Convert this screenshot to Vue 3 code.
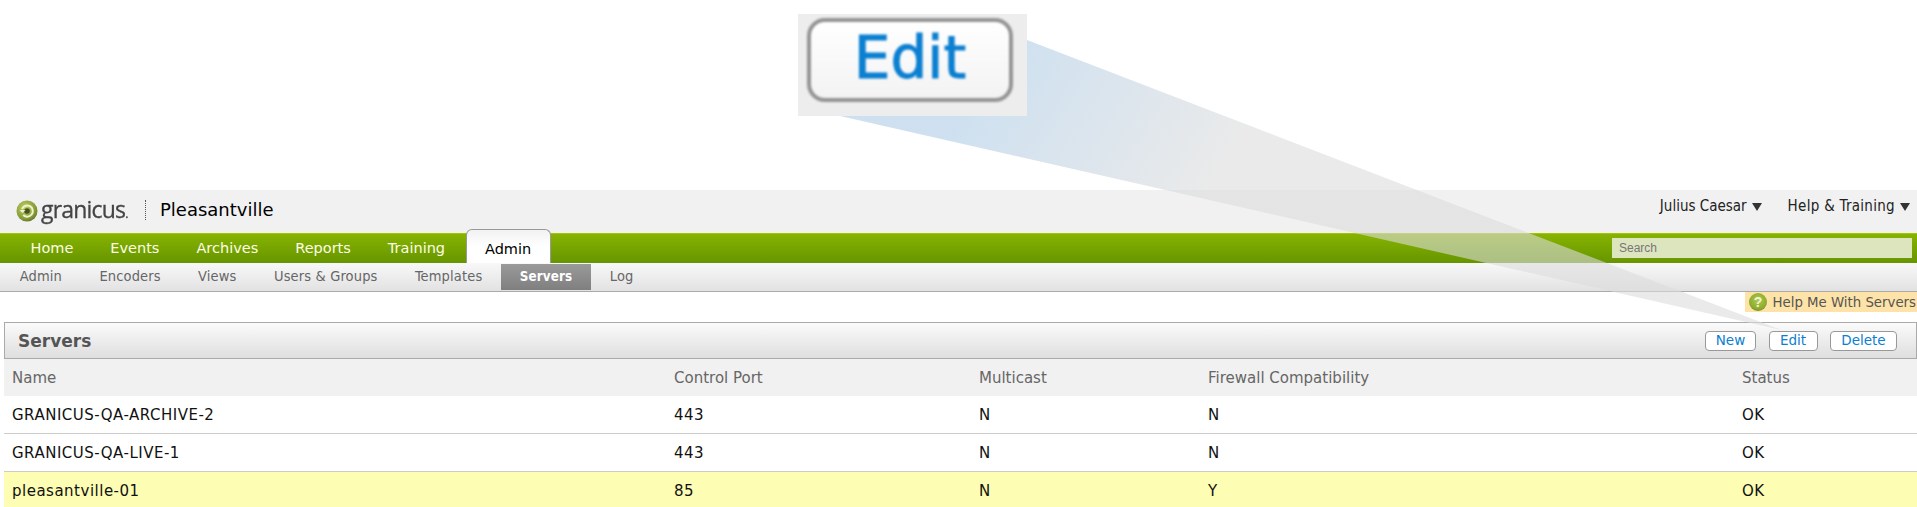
<script setup>
const mainTabs = ['Home', 'Events', 'Archives', 'Reports', 'Training']
const subTabs = ['Admin', 'Encoders', 'Views', 'Users & Groups', 'Templates', 'Servers', 'Log']
const servers = [
  { name: 'GRANICUS-QA-ARCHIVE-2', port: '443', multicast: 'N', firewall: 'N', status: 'OK' },
  { name: 'GRANICUS-QA-LIVE-1', port: '443', multicast: 'N', firewall: 'N', status: 'OK' },
  { name: 'pleasantville-01', port: '85', multicast: 'N', firewall: 'Y', status: 'OK', selected: true }
]
</script>

<template>
  <div class="page">
    <header class="top-bar">
      <div class="brand">
        <svg class="logo-mark" width="22" height="22" viewBox="0 0 22 22">
          <defs>
            <radialGradient id="logoBall" cx="0.4" cy="0.35" r="0.75">
              <stop offset="0" stop-color="#c2cf62" />
              <stop offset="0.7" stop-color="#849a35" />
              <stop offset="1" stop-color="#56632c" />
            </radialGradient>
          </defs>
          <circle cx="11" cy="11" r="10.5" fill="url(#logoBall)" />
          <path d="M6 9a5.6 5.6 0 1 1 1.2 6" fill="none" stroke="#eef2cf" stroke-width="2" />
          <circle cx="11" cy="11" r="2.8" fill="#46521f" />
          <path d="M3.5 10h6l-3 3z" fill="#eef2cf" />
        </svg>
        <span class="logo-text">granicus<i>.</i></span>
        <span class="site-name">Pleasantville</span>
      </div>
      <div class="user-links">
        <span>Julius Caesar<b class="caret"></b></span>
        <span class="help-menu">Help &amp; Training<b class="caret"></b></span>
      </div>
    </header>

    <nav class="main-nav">
      <a v-for="t in mainTabs" :key="t" class="main-tab">{{ t }}</a>
      <a class="main-tab active">Admin</a>
      <input class="search" placeholder="Search" />
    </nav>

    <nav class="sub-nav">
      <a v-for="t in subTabs" :key="t" class="sub-tab" :class="{ current: t === 'Servers' }">{{ t }}</a>
    </nav>

    <div class="help-row">
      <span class="help-link">
        <svg width="18" height="18" viewBox="0 0 18 18">
          <defs>
            <radialGradient id="helpBall" cx="0.5" cy="0.4" r="0.65">
              <stop offset="0" stop-color="#b4cb4f" />
              <stop offset="0.75" stop-color="#8cab2c" />
              <stop offset="1" stop-color="#66841f" />
            </radialGradient>
          </defs>
          <circle cx="9" cy="9" r="9" fill="url(#helpBall)" />
          <text x="9" y="14" text-anchor="middle" class="help-q">?</text>
        </svg>
        Help Me With Servers
      </span>
    </div>

    <section class="panel">
      <div class="panel-head">
        <h2>Servers</h2>
        <div class="actions">
          <button class="btn new">New</button>
          <button class="btn edit">Edit</button>
          <button class="btn delete">Delete</button>
        </div>
      </div>
      <div class="row head">
        <span>Name</span><span>Control Port</span><span>Multicast</span><span>Firewall Compatibility</span><span>Status</span>
      </div>
      <div v-for="s in servers" :key="s.name" class="row" :class="{ selected: s.selected }">
        <span>{{ s.name }}</span><span>{{ s.port }}</span><span>{{ s.multicast }}</span><span>{{ s.firewall }}</span><span>{{ s.status }}</span>
      </div>
    </section>

    <!-- callout wedge from the magnified button down to the real one -->
    <svg class="wedge" width="1917" height="507" viewBox="0 0 1917 507">
      <defs>
        <linearGradient id="wedgeFill" gradientUnits="userSpaceOnUse" x1="1000" y1="60" x2="1210" y2="190">
          <stop offset="0" stop-color="#aecce6" />
          <stop offset="1" stop-color="#dcdcdc" />
        </linearGradient>
      </defs>
      <polygon points="1027,40 1781,330 840,116" fill="url(#wedgeFill)" fill-opacity="0.6" />
    </svg>
    <div class="magnified">
      <span>Edit</span>
    </div>
  </div>
</template>

<style>
html, body { margin: 0; background: #fff; overflow: hidden; }
</style>

<style scoped>
.page {
  position: relative;
  width: 1917px;
  height: 507px;
  padding-top: 190px;
  box-sizing: border-box;
  overflow: hidden;
  font-family: "DejaVu Sans", sans-serif;
  font-size: 14px;
  color: #111;
}

.top-bar {
  height: 43px;
  background: #f1f1f1;
  display: flex;
  justify-content: space-between;
  padding: 0 7px 0 16px;
}

.brand {
  display: flex;
  align-items: center;
  height: 36px;
  margin-top: 1px;
}

.logo-mark { flex: none; margin-top: 3px; }

.logo-text {
  width: 104px;
  margin-left: 3px;
  font-family: "Open Sans", sans-serif;
  font-size: 23px;
  letter-spacing: -0.8px;
  color: #444;
  -webkit-text-stroke: 0.3px #444;
  filter: blur(0.35px);
}

.logo-text i { font-size: 12px; font-style: normal; }

.site-name {
  padding-left: 14px;
  border-left: 1px dotted #555;
  font-size: 18px;
  line-height: 20px;
  margin-top: 2px;
  color: #000;
}

.user-links {
  display: flex;
  gap: 26px;
  padding-top: 7px;
  font-size: 15px;
  font-stretch: condensed;
  color: #222;
}

.help-menu { letter-spacing: 0.3px; }

.caret {
  display: inline-block;
  margin-left: 5px;
  border-left: 5.5px solid transparent;
  border-right: 5.5px solid transparent;
  border-top: 8px solid #333;
}

.main-nav {
  height: 30px;
  box-sizing: border-box;
  border-top: 1px solid #a8c400;
  background: linear-gradient(#87b300, #669500);
  display: flex;
  padding-left: 12px;
  position: relative;
}

.main-tab {
  height: 29px;
  padding: 0 18.5px;
  line-height: 28px;
  font-size: 14.5px;
  color: #fdfde8;
}

.main-tab.active {
  position: relative;
  box-sizing: border-box;
  width: 85px;
  height: 34px;
  margin: -5px 0 0 2px;
  padding: 5px 0 0;
  text-align: center;
  color: #000;
  background: linear-gradient(#f2f2f2, #fff 50%);
  border: 1px solid #999;
  border-bottom: 0;
  border-radius: 6px 6px 0 0;
}

.search {
  margin: 4px 5px 0 auto;
  width: 300px;
  height: 20px;
  box-sizing: border-box;
  padding: 0 7px;
  border: 0;
  outline: 0;
  background: #dde5bf;
  font-family: "Liberation Sans", sans-serif;
  font-size: 12px;
}

.search::placeholder { color: #777; opacity: 1; }

.sub-nav {
  height: 29px;
  box-sizing: border-box;
  border-bottom: 1px solid #aaa;
  background: linear-gradient(#f8f8f8, #e2e2e2);
  display: flex;
  padding-left: 1px;
  font-size: 14.5px;
  font-stretch: condensed;
  letter-spacing: 0.15px;
  color: #666;
}

.sub-tab {
  padding: 0 18.7px;
  margin-top: 1px;
  height: 26px;
  line-height: 25px;
}

.sub-tab.current {
  color: #fff;
  font-weight: 700;
  font-size: 13.3px;
  background: linear-gradient(#9a9a9a, #7f7f7f);
}

.help-row {
  height: 30px;
  display: flex;
  justify-content: flex-end;
  align-items: flex-start;
}

.help-link {
  height: 20px;
  padding: 0 1px 0 4px;
  background: #fde3a7;
  color: #555;
  font-size: 14.8px;
  font-stretch: condensed;
  line-height: 20px;
  display: flex;
  align-items: center;
  gap: 5px;
}

.help-q {
  font-family: "Liberation Sans", sans-serif;
  font-size: 14px;
  font-weight: 700;
  fill: #f2f4d8;
}

.panel { margin-left: 4px; }

.panel-head {
  height: 37px;
  box-sizing: border-box;
  border: 1px solid #aaa;
  background: linear-gradient(#fbfbfb, #dedede);
  display: flex;
  align-items: center;
  justify-content: space-between;
  padding: 0 19px 0 13px;
}

.panel-head h2 {
  margin: 0;
  font-size: 17px;
  color: #555;
}

.actions { display: flex; gap: 12.5px; }

.btn {
  height: 20px;
  padding: 0;
  box-sizing: border-box;
  border: 1px solid #999;
  border-radius: 4px;
  background: #fff;
  color: #0b7fd1;
  font-family: inherit;
  font-size: 13.5px;
  line-height: 17px;
}

.btn.new { width: 51px; }
.btn.edit { width: 49px; }
.btn.delete { width: 67px; }

.row {
  display: grid;
  grid-template-columns: 662px 305px 229px 534px 1fr;
  height: 38px;
  box-sizing: border-box;
  border-bottom: 1px solid #ccc;
  padding: 0 0 0 8px;
  font-size: 15px;
  letter-spacing: 0.5px;
  line-height: 39px;
}

.row.head {
  height: 37px;
  background: #f1f1f1;
  color: #666;
  border-bottom: 0;
  letter-spacing: 0;
}

.row.selected {
  background: #fdfdb3;
  border-bottom: 0;
}

.wedge {
  position: absolute;
  left: 0;
  top: 0;
  pointer-events: none;
}

.magnified {
  position: absolute;
  left: 798px;
  top: 14px;
  width: 229px;
  height: 102px;
  box-sizing: border-box;
  background: #ededed;
  padding: 4px 14px 14px 9px;
}

.magnified span {
  display: block;
  height: 84px;
  box-sizing: border-box;
  border: 4px solid #949494;
  border-radius: 18px;
  background: linear-gradient(#fff, #f3f3f3);
  color: #0b7fd1;
  font-size: 58px;
  -webkit-text-stroke: 1px #0b7fd1;
  line-height: 72px;
  text-align: center;
  filter: blur(0.9px);
}
</style>
